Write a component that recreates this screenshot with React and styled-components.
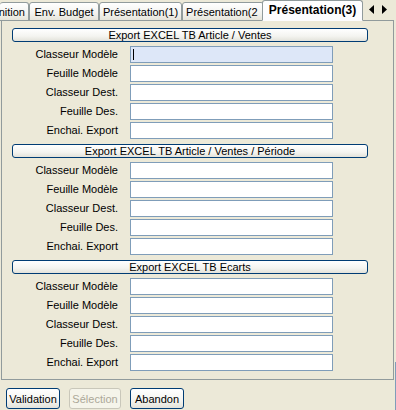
import React from "react";
import styled, { createGlobalStyle } from "styled-components";

const GlobalStyle = createGlobalStyle`
  html, body {
    margin: 0;
    padding: 0;
    background: #ece9d8;
  }
  body {
    font-family: "Liberation Sans", Arial, sans-serif;
    font-size: 11px;
    color: #000;
  }
`;

const Window = styled.div`
  width: 396px;
  height: 410px;
  display: flex;
  flex-direction: column;
  box-sizing: border-box;
  overflow: hidden;
  position: relative;

  &::after {
    content: "";
    position: absolute;
    right: 0;
    top: 362px;
    bottom: 0;
    width: 1px;
    background: #7f9db9;
  }
`;

const TabStrip = styled.div`
  display: flex;
  align-items: flex-end;
  height: 21px;
  position: relative;
  z-index: 1;
  margin-bottom: -1px;
`;

const Tab = styled.div`
  box-sizing: border-box;
  flex: none;
  width: ${(p) => p.$w}px;
  height: ${(p) => (p.$active ? 21 : 19)}px;
  display: flex;
  align-items: center;
  justify-content: ${(p) => p.$align || "center"};
  white-space: nowrap;
  overflow: hidden;
  font-size: ${(p) => (p.$active ? "12px" : "11px")};
  font-weight: ${(p) => (p.$active ? "bold" : "normal")};
  border: 1px solid #919b9c;
  border-bottom: ${(p) => (p.$active ? "1px solid #fcfcfe" : "1px solid #919b9c")};
  border-left: ${(p) => (p.$noLeft ? "none" : "1px solid #919b9c")};
  border-radius: 3px 3px 0 0;
  background: ${(p) =>
    p.$active
      ? "linear-gradient(#ffffff, #fcfcfe)"
      : "linear-gradient(#ffffff 0%, #f3f3ef 60%, #e6e4da 100%)"};
  margin-left: ${(p) => p.$ml || 0}px;
  padding: ${(p) => (p.$active ? "0 0 1px" : "0")};
  position: relative;
  z-index: ${(p) => (p.$active ? 2 : 1)};
`;

const Arrows = styled.div`
  flex: 1;
  height: 19px;
  display: flex;
  align-items: center;
  justify-content: center;
  gap: 8px;
  padding-right: 4px;
  align-self: flex-start;
  svg {
    display: block;
  }
`;

const Panel = styled.div`
  box-sizing: border-box;
  margin-left: 1px;
  width: 393px;
  height: 360px;
  border: 1px solid #919b9c;
  background: #ece9d8;
  padding: 7px 0 0 10px;
  display: flex;
  flex-direction: column;
`;

const Section = styled.section`
  display: flex;
  flex-direction: column;
  margin-bottom: 5px;
`;

const SectionHeader = styled.div`
  box-sizing: border-box;
  width: 356px;
  height: 14px;
  border: 1px solid #003c74;
  border-radius: 3px;
  background: linear-gradient(#ffffff 0%, #f4f4f0 60%, #e3e2da 100%);
  display: flex;
  align-items: center;
  justify-content: center;
  line-height: 12px;
  margin-bottom: 4px;
`;

const Rows = styled.div`
  display: grid;
  grid-template-columns: 106px 203px;
  column-gap: 12px;
  row-gap: 2px;
`;

const Label = styled.label`
  text-align: right;
  height: 17px;
  line-height: 17px;
  white-space: nowrap;
`;

const Field = styled.div`
  box-sizing: border-box;
  height: 17px;
  border: 1px solid #7f9db9;
  background: ${(p) => (p.$focused ? "#dde7f8" : "#ffffff")};
  position: relative;
`;

const Caret = styled.span`
  position: absolute;
  left: 2px;
  top: 2px;
  width: 1px;
  height: 11px;
  background: #000;
`;

const Footer = styled.div`
  display: flex;
  gap: 9px;
  padding: 8px 0 0 6px;
`;

const Button = styled.button`
  box-sizing: border-box;
  height: 21px;
  width: ${(p) => p.$w}px;
  padding: 0;
  font: inherit;
  border: 1px solid ${(p) => (p.disabled ? "#c9c7ba" : "#003c74")};
  border-radius: 3px;
  color: ${(p) => (p.disabled ? "#aca899" : "#000")};
  background: ${(p) =>
    p.disabled
      ? "#f5f4ea"
      : "linear-gradient(#ffffff 0%, #f4f4f0 60%, #e3e2da 100%)"};
`;

const fields = [
  "Classeur Modèle",
  "Feuille Modèle",
  "Classeur Dest.",
  "Feuille Des.",
  "Enchai. Export",
];

const sections = [
  "Export EXCEL TB Article / Ventes",
  "Export EXCEL TB Article / Ventes / Période",
  "Export EXCEL TB Ecarts",
];

const ArrowLeft = () => (
  <svg width="5" height="9" viewBox="0 0 5 9">
    <path d="M5 0 L0 4.5 L5 9 Z" fill="#000" />
  </svg>
);

const ArrowRight = () => (
  <svg width="5" height="9" viewBox="0 0 5 9">
    <path d="M0 0 L5 4.5 L0 9 Z" fill="#000" />
  </svg>
);

const App = () => {
  return (
    <>
      <GlobalStyle />
      <Window>
        <TabStrip>
          <Tab $w={29} $noLeft $align="flex-end">nition&nbsp;</Tab>
          <Tab $w={70}>Env. Budget</Tab>
          <Tab $w={83}>Présentation(1)</Tab>
          <Tab $w={82} $align="flex-start">&nbsp;Présentation(2</Tab>
          <Tab $w={101} $active $ml={-2}>Présentation(3)</Tab>
          <Arrows>
            <ArrowLeft />
            <ArrowRight />
          </Arrows>
        </TabStrip>
        <Panel>
          {sections.map((title, si) => (
            <Section key={title}>
              <SectionHeader>{title}</SectionHeader>
              <Rows>
                {fields.map((f, fi) => (
                  <React.Fragment key={f}>
                    <Label>{f}</Label>
                    <Field $focused={si === 0 && fi === 0}>
                      {si === 0 && fi === 0 && <Caret />}
                    </Field>
                  </React.Fragment>
                ))}
              </Rows>
            </Section>
          ))}
        </Panel>
        <Footer>
          <Button $w={54}>Validation</Button>
          <Button $w={52} disabled>Sélection</Button>
          <Button $w={54}>Abandon</Button>
        </Footer>
      </Window>
    </>
  );
};

export default App;
